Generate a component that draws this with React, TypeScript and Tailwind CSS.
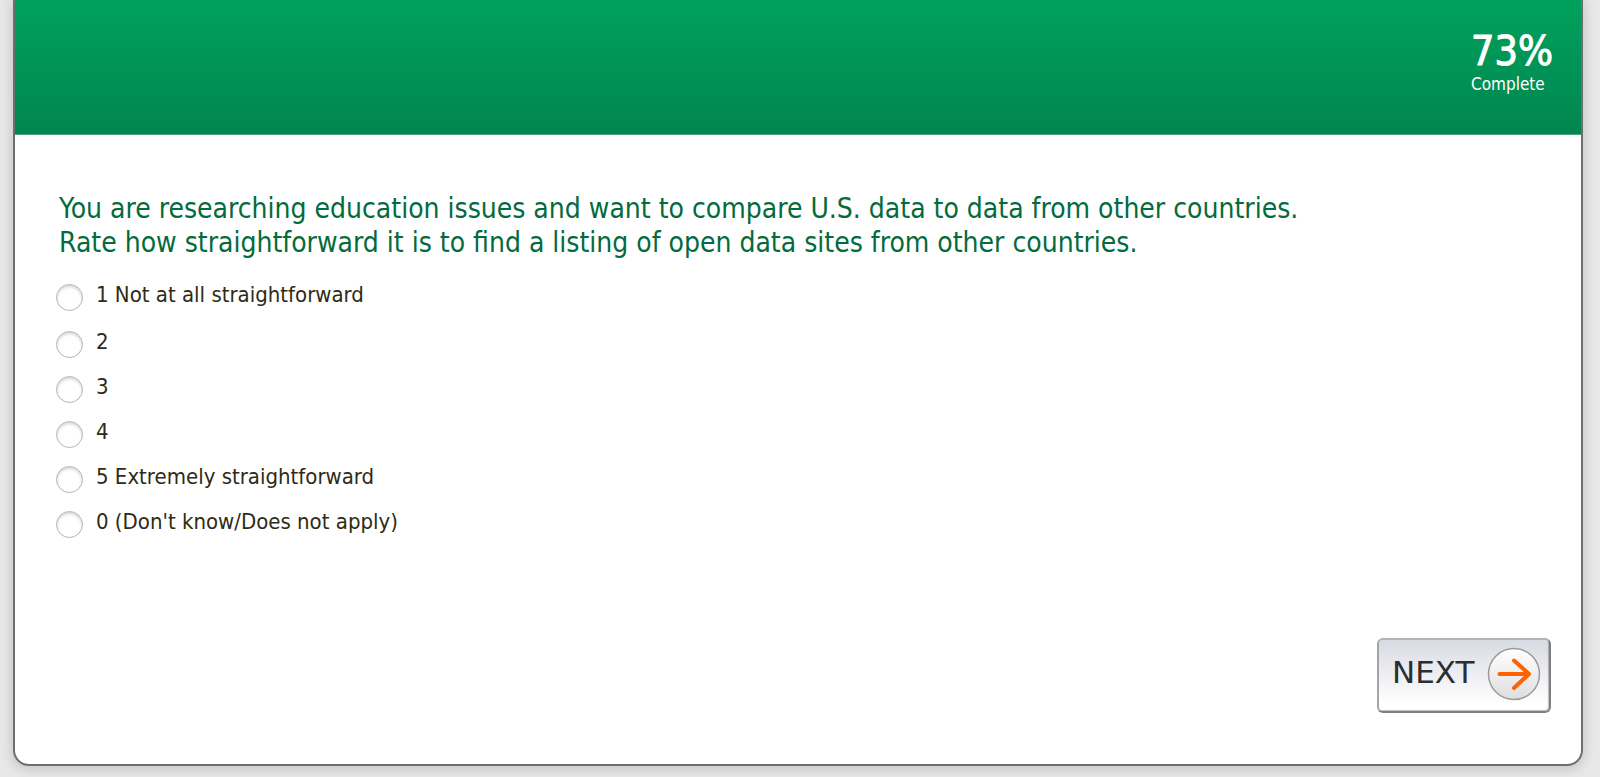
import React, { useState } from "react";

const options = [
  { value: "1", label: "1 Not at all straightforward" },
  { value: "2", label: "2" },
  { value: "3", label: "3" },
  { value: "4", label: "4" },
  { value: "5", label: "5 Extremely straightforward" },
  { value: "0", label: "0 (Don't know/Does not apply)" },
];

function ArrowBadge() {
  return (
    <svg className="size-[54px]" viewBox="0 0 54 54" fill="none" aria-hidden="true">
      <defs>
        <linearGradient id="badge" x1="0" y1="0" x2="0" y2="1">
          <stop offset="0" stopColor="#ffffff" />
          <stop offset="1" stopColor="#dedede" />
        </linearGradient>
      </defs>
      <circle cx="27" cy="27" r="25.5" fill="url(#badge)" stroke="#9a9a9a" strokeWidth="1.5" />
      <path d="M12.5 27H42M27 13.5L42 27L27 41" stroke="#ff6200" strokeWidth="4" strokeLinecap="round" strokeLinejoin="round" />
    </svg>
  );
}

export default function App() {
  const [answer, setAnswer] = useState("");

  return (
    <div className="min-h-screen bg-[#e8e8e8] pr-[17px] pb-[11px] pl-[13px] font-['DejaVu_Sans_Condensed','DejaVu_Sans',sans-serif] [font-stretch:condensed]">
      <main className="overflow-hidden rounded-b-2xl border-2 border-t-0 border-[#6e6e6e] bg-white shadow-[0_2px_12px_2px_rgba(0,0,0,0.14)]">
        <header className="flex justify-end border-b border-[#4da67b] bg-linear-to-b from-[#00a15d] to-[#008650] pt-7 pr-7 pb-10 text-white">
          <div className="w-[82px]">
            <div className="text-[41px] leading-[46px] [-webkit-text-stroke:1px_white]">73%</div>
            <div className="text-[17px] leading-5">Complete</div>
          </div>
        </header>

        <form className="flex flex-col pt-[57px] pr-[30px] pb-[51px] pl-[41px]" onSubmit={(e) => e.preventDefault()}>
          <fieldset>
            <legend className="pl-[3px] text-[28px] leading-[34px] text-[#036b3d]">
              You are researching education issues and want to compare U.S. data to data from other countries.
              <br />
              Rate how straightforward it is to find a listing of open data sites from other countries.
            </legend>
            <div className="flex flex-col pt-4">
              {options.map((o) => (
                <label key={o.value} className="flex h-[45px] items-start gap-[13px] text-[22px] leading-[38px] text-[#2f2b14] first:h-[47px]">
                  <input
                    type="radio"
                    name="rating"
                    value={o.value}
                    checked={answer === o.value}
                    onChange={() => setAnswer(o.value)}
                    className="mt-2 size-[27px] appearance-none rounded-full border border-[#b4b4b4] bg-white shadow-[inset_0_2px_3px_rgba(0,0,0,0.16)] checked:bg-[#8a8a8a]"
                  />
                  {o.label}
                </label>
              ))}
            </div>
          </fieldset>

          <button
            type="submit"
            className="mt-[90px] flex h-[75px] w-[174px] items-center justify-between self-end rounded-md border-2 border-t-[#b4b4b8] border-r-[#808080] border-b-[#808080] border-l-[#a4a4a8] bg-linear-to-b from-[#d9dbe3] to-white to-90% pr-2 pb-[3px] pl-[13px] font-['DejaVu_Sans',sans-serif] text-[31px] text-[#2b2d30] shadow-[inset_-1px_-1px_1px_rgba(0,0,0,0.25)] [font-stretch:normal]"
          >
            <span className="pb-1">NEXT</span>
            <ArrowBadge />
          </button>
        </form>
      </main>
    </div>
  );
}
